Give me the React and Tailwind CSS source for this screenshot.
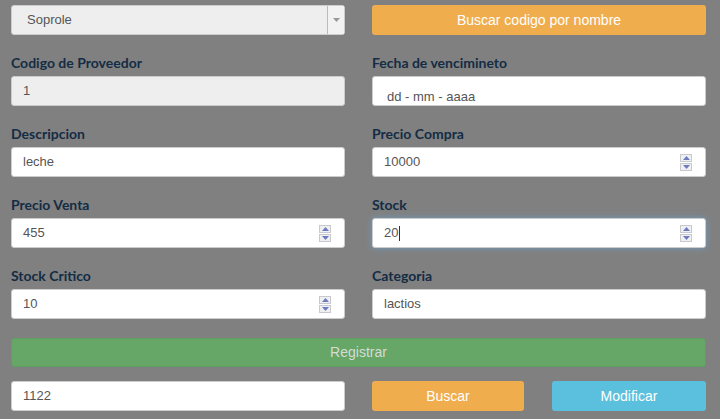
import React from "react";

const Spinner = () => (
    <div className="flex flex-col gap-[1px] mr-[13px]">
        <div className="w-[12px] h-[8px] bg-[#f0f0f0] border border-[#c8c8d0] flex items-center justify-center">
            <svg width="7" height="4" viewBox="0 0 7 4"><path d="M3.5 0 L7 4 L0 4 Z" fill="#6c7bbf" /></svg>
        </div>
        <div className="w-[12px] h-[8px] bg-[#f0f0f0] border border-[#c8c8d0] flex items-center justify-center">
            <svg width="7" height="4" viewBox="0 0 7 4"><path d="M0 0 L7 0 L3.5 4 Z" fill="#6c7bbf" /></svg>
        </div>
    </div>
);

const Label = ({children}) => (
    <div className="h-[18px] mt-[18px] mb-[5px] flex items-center text-[14px] font-bold text-[#142c44] font-['Lato',sans-serif]">
        {children}
    </div>
);

const Field = ({value, number, focused, disabled, extra = ""}) => (
    <div
        className={
            "h-[30px] flex items-center rounded-[3px] border text-[13px] text-[#555] font-['Liberation_Sans',Arial,sans-serif] " +
            (disabled ? "bg-[#eeeeee] border-[#cccccc] " : "bg-white border-[#cccccc] ") +
            (focused ? "border-[#66afe9] shadow-[0_0_6px_rgba(102,175,233,0.6)] " : "") +
            extra
        }
    >
        <div className="flex-1 pl-[11px]">
            {value}
            {focused && <span className="inline-block w-[1px] h-[15px] bg-[#333] align-middle ml-[1px]" />}
        </div>
        {number && <Spinner />}
    </div>
);

const App = () => {
    return (
        <div className="w-[720px] h-[419px] bg-[#808080] pl-[11px] pr-[14px] pt-[5px] overflow-hidden font-['Liberation_Sans',Arial,sans-serif]">
            <div className="grid grid-cols-2 gap-x-[27px]">
                <div>
                    <div className="h-[30px] flex items-center rounded-[3px] border border-[#cccccc] bg-[#eeeeee] text-[13px] text-[#555]">
                        <div className="flex-1 pl-[15px]">Soprole</div>
                        <div className="w-[17px] h-[28px] mr-[0px] bg-[#f2f2f2] border-l border-[#bbb] flex items-center justify-center">
                            <svg width="7" height="4" viewBox="0 0 7 4"><path d="M0 0 L7 0 L3.5 4 Z" fill="#999" /></svg>
                        </div>
                    </div>
                    <Label>Codigo de Proveedor</Label>
                    <Field value="1" disabled />
                    <Label>Descripcion</Label>
                    <Field value="leche" />
                    <Label>Precio Venta</Label>
                    <Field value="455" number />
                    <Label>Stock Critico</Label>
                    <Field value="10" number />
                </div>
                <div>
                    <button className="w-full h-[30px] rounded-[3px] bg-[#f0ad4e] text-white text-[14px]">
                        Buscar codigo por nombre
                    </button>
                    <Label>Fecha de vencimineto</Label>
                    <Field value={<span className="inline-block pt-[12px] pl-[3px]">dd - mm - aaaa</span>} />
                    <Label>Precio Compra</Label>
                    <Field value="10000" number />
                    <Label>Stock</Label>
                    <Field value="20" number focused />
                    <Label>Categoria</Label>
                    <Field value="lactios" />
                </div>
            </div>
            <button className="w-full h-[29px] mt-[19px] rounded-[3px] bg-[#66a667] border border-[#5e9e60] text-[#d4dcd4] text-[14px]">
                Registrar
            </button>
            <div className="flex mt-[14px]">
                <div className="w-[334px]">
                    <Field value="1122" />
                </div>
                <button className="w-[152px] h-[30px] ml-[27px] rounded-[3px] bg-[#f0ad4e] text-white text-[14px]">
                    Buscar
                </button>
                <button className="w-[154px] h-[30px] ml-[28px] rounded-[3px] bg-[#5bc0de] text-white text-[14px]">
                    Modificar
                </button>
            </div>
        </div>
    );
};

export default App;
